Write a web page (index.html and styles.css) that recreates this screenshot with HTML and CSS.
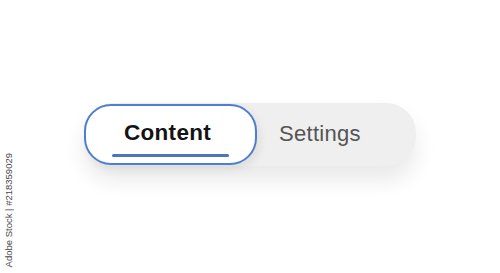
FILE: index.html
```html
<!DOCTYPE html>
<html>
<head>
<meta charset="utf-8">
<link rel="stylesheet" href="styles.css">
</head>
<body>
<div class="stage">
  <div class="segmented">
    <div class="tab tab-active">
      <span class="tab-label">Content</span>
      <span class="tab-underline"></span>
    </div>
    <div class="tab tab-idle">
      <span class="tab-label">Settings</span>
    </div>
  </div>
</div>
<div class="credit">Adobe Stock | #218359029</div>
</body>
</html>
```
FILE: styles.css
```css
html, body {
  margin: 0;
  padding: 0;
  background: #ffffff;
  width: 500px;
  height: 273px;
  overflow: hidden;
  font-family: "Liberation Sans", Arial, sans-serif;
}

.stage {
  padding: 103px 0 0 84px;
}

.segmented {
  display: flex;
  align-items: flex-start;
  width: 332px;
  height: 63px;
  background: #efefef;
  border-radius: 30px;
  box-shadow: 0 14px 22px rgba(0, 0, 0, 0.09);
}

.tab {
  display: flex;
  flex-direction: column;
  align-items: center;
}

.tab-label {
  font-size: 22px;
  line-height: 26px;
}

.tab-active {
  box-sizing: border-box;
  width: 173px;
  height: 61px;
  margin-top: 1px;
  padding-top: 14px;
  border: 2px solid #4f7fca;
  border-radius: 27px;
  background: #ffffff;
  box-shadow: 3px 4px 10px rgba(0, 0, 0, 0.07);
}

.tab-active .tab-label {
  font-size: 22.5px;
  font-weight: bold;
  color: #141414;
  letter-spacing: 0.3px;
  margin-right: 6px;
}

.tab-underline {
  width: 117px;
  height: 3px;
  margin-top: 8px;
  border-radius: 2px;
  background: #4a76bd;
}

.tab-idle {
  padding: 18px 0 0 22px;
}

.tab-idle .tab-label {
  color: #555555;
  letter-spacing: 0.3px;
}

.credit {
  position: absolute;
  left: 3px;
  top: 153px;
  writing-mode: vertical-rl;
  transform: rotate(180deg);
  font-size: 9.5px;
  line-height: 12px;
  color: #4a4a4a;
  white-space: nowrap;
}
```
